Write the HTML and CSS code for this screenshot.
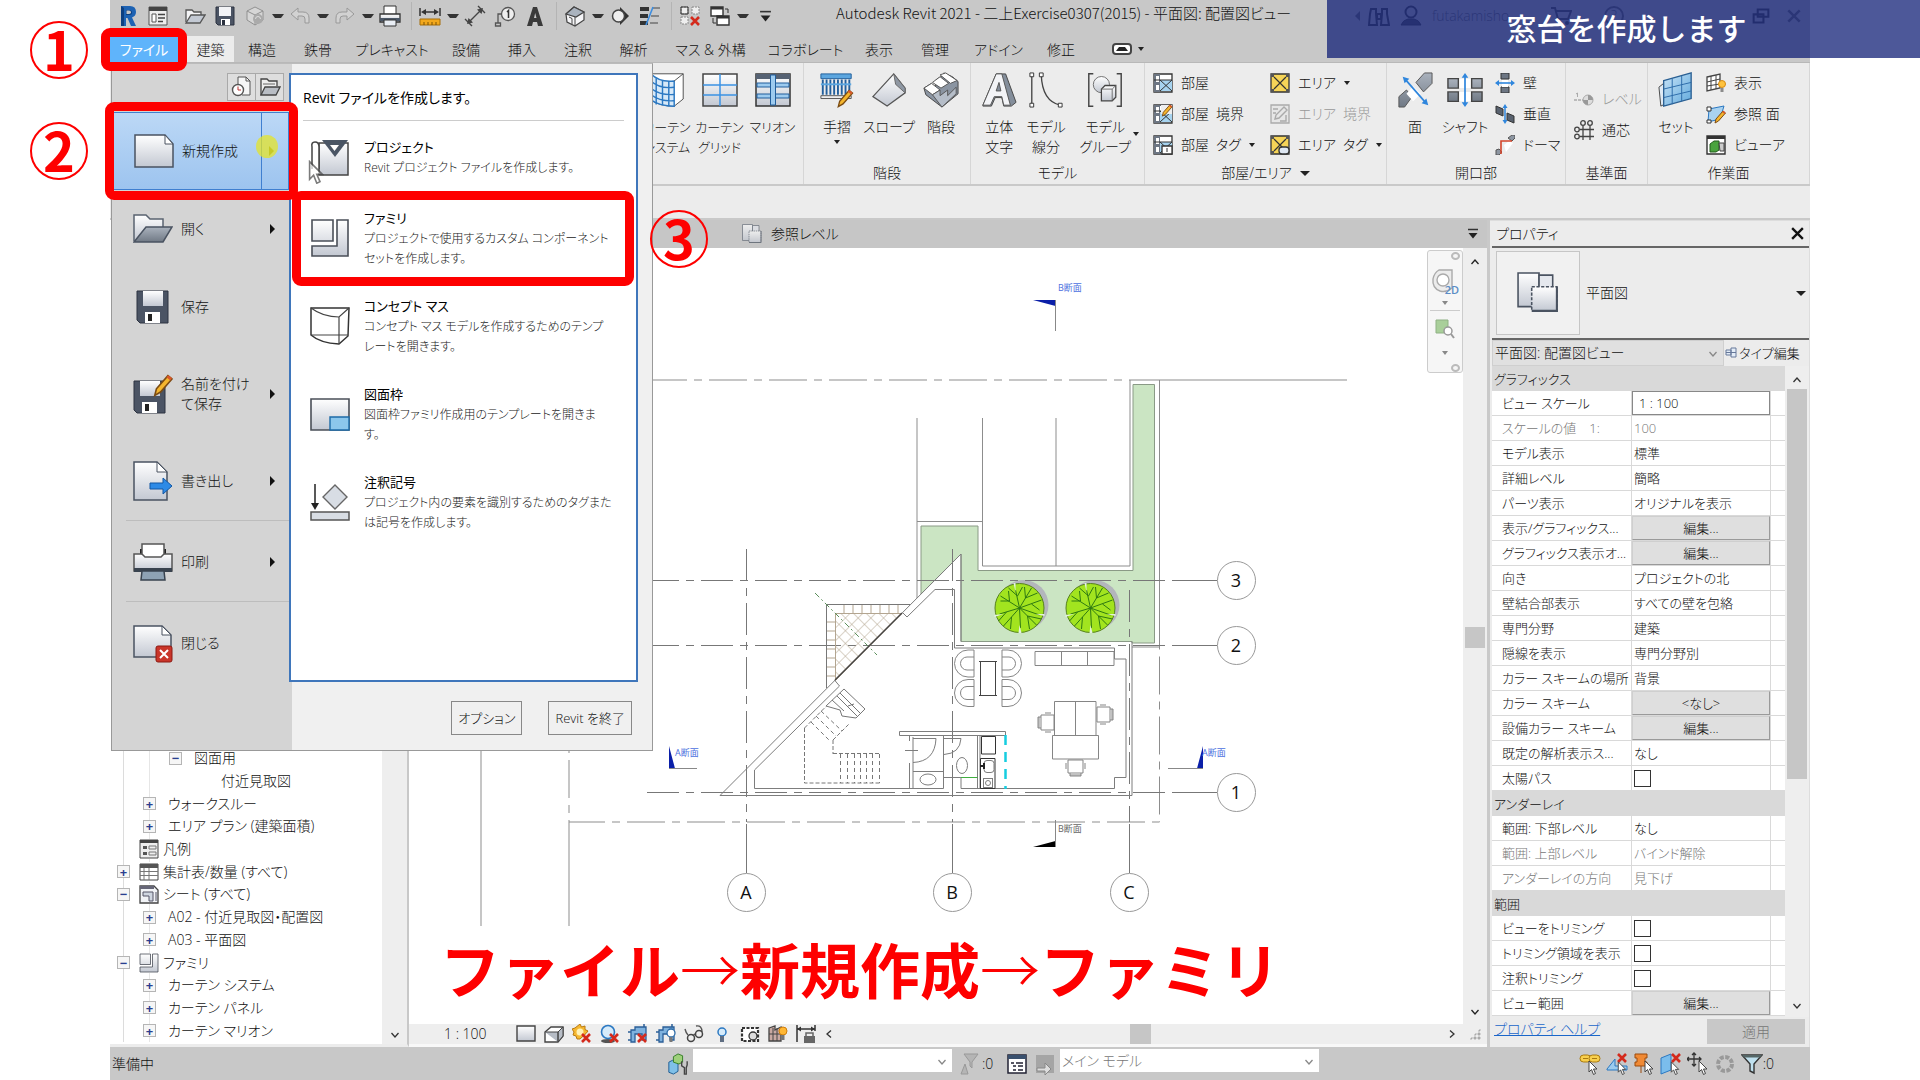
FILE: index.html
```html
<!DOCTYPE html>
<html lang="ja">
<head>
  <meta charset="UTF-8">
  <meta name="viewport" content="width=device-width, initial-scale=1.0">
  <title>Autodesk Revit 2021 - 配置図ビュー</title>
  <link rel="stylesheet" href="styles.css">
</head>
<body>

<!-- Icon sprite -->
<svg class="sprite" aria-hidden="true">
  <defs>
    <linearGradient id="metal" x1="0" y1="0" x2="0" y2="1"><stop offset="0" stop-color="#fff"/><stop offset="1" stop-color="#c3c8d2"/></linearGradient>
    <linearGradient id="steel" x1="0" y1="0" x2="0" y2="1"><stop offset="0" stop-color="#aab2bd"/><stop offset="1" stop-color="#707985"/></linearGradient>
    <linearGradient id="glass" x1="0" y1="0" x2="1" y2="1"><stop offset="0" stop-color="#c9e4f7"/><stop offset="1" stop-color="#5fa8dc"/></linearGradient>
  </defs>

  <!-- shared bits -->
  <symbol id="i-pencil" viewBox="0 0 12 14"><path d="M1 13l1-4 7-8 2.500 2-7 8z" fill="#f4b52d" stroke="#7b4b12"/><path d="M8 2l2.500 2 1-1.500-2.300-1.800z" fill="#d9582a"/></symbol>
  <symbol id="i-cross" viewBox="0 0 10 10"><path d="M1 1l8 8M9 1l-8 8" stroke="#d42a1c" stroke-width="2.600" fill="none"/></symbol>
  <symbol id="i-pointer" viewBox="0 0 10 15"><path d="M1 1v11l2.500-2.500 2 5 2-1-2-4.500h3.500z" fill="#fff" stroke="#444"/></symbol>

  <!-- quick access -->
  <symbol id="i-revit" viewBox="0 0 22 22"><path d="M4 1h9q6 0 6 6 0 4-4 5.500l4 8.500h-5l-3.500-8H9v8H4z" fill="#1d62b3"/><path d="M4 1l3 2v18H4zM9 5h3q3 0 3 2.500T12 10H9z" fill="#0d3f80"/><path d="M9.500 5.500h2.500q2 0 2 1.700T12 9H9.500z" fill="#c8c8c8"/></symbol>
  <symbol id="i-home" viewBox="0 0 22 22"><path d="M2 2h18v18H2z" fill="#eee" stroke="#555"/><path d="M2 2h18v4H2z" fill="#444"/><path d="M5 9h4v8H5z" fill="#fff" stroke="#555"/><path d="M11 9.500h7M11 13h7M11 16.500h5" stroke="#444" stroke-width="1.500"/></symbol>
  <symbol id="i-open" viewBox="0 0 22 22"><path d="M2 17V5h6l2 2h7v4" fill="#f4f4f6" stroke="#555" stroke-width="1.300"/><path d="M2 18l5-8h14l-5 8z" fill="#c3c9d3" stroke="#555" stroke-width="1.300"/></symbol>
  <symbol id="i-save" viewBox="0 0 22 22"><path d="M2 2h18v18H4l-2-2z" fill="#4b5464" stroke="#2c3240"/><path d="M5 2h12v9H5z" fill="#f2f3f6"/><path d="M7 14h9v6H7z" fill="#fff"/><path d="M8 15h3v5H8z" fill="#2c3240"/></symbol>
  <symbol id="i-sync" viewBox="0 0 22 22"><path d="M11 2l8 4v9l-8 5-8-5V6z" fill="#d6d6d6" stroke="#909090"/><path d="M3 6l8 4 8-4M11 10v10" fill="none" stroke="#909090"/><circle cx="14" cy="14" r="5" fill="#aaa"/><path d="M11.500 14a2.500 2.500 0 0 1 5 0" stroke="#ddd" fill="none"/></symbol>
  <symbol id="i-undo" viewBox="0 0 22 22"><path d="M2 9l7-6v4h5q6 0 6 6v5h-4v-4q0-3-3-3H9v4z" fill="#d2d2d2" stroke="#999"/></symbol>
  <symbol id="i-redo" viewBox="0 0 22 22"><path d="M20 9l-7-6v4H8q-6 0-6 6v5h4v-4q0-3 3-3h4v4z" fill="#d2d2d2" stroke="#999"/></symbol>
  <symbol id="i-print" viewBox="0 0 22 22"><path d="M5 1h12v9H5z" fill="#fff" stroke="#333"/><path d="M1 9h20v8H1z" fill="url(#metal)" stroke="#333" stroke-width="1.300"/><path d="M1 13h20v3H1z" fill="#4c5868"/><path d="M5 15h12v6H5z" fill="#e9eef5" stroke="#333"/></symbol>
  <symbol id="i-measure" viewBox="0 0 22 22"><path d="M1 14h20v6H1z" fill="#f2a81d" stroke="#a36d0b"/><path d="M5 17v3M9 17v3M13 17v3M17 17v3" stroke="#7c5205"/><path d="M4 7h14M1 3v8M21 3v8" stroke="#333" stroke-width="1.500"/><path d="M2 7l5-3v6zM20 7l-5-3v6z" fill="#333"/></symbol>
  <symbol id="i-dim" viewBox="0 0 22 22"><path d="M4 18L18 4M1 14l7 7M14 1l7 7" stroke="#444" stroke-width="1.400"/><path d="M3 19l1.500-6 4.500 4.500zM19 3l-1.500 6L13 4.500z" fill="#444"/></symbol>
  <symbol id="i-tag" viewBox="0 0 22 22"><circle cx="14" cy="9" r="6.500" fill="#eee" stroke="#555" stroke-width="1.300"/><path d="M13 7l1.500-1.500V13" stroke="#333" fill="none" stroke-width="1.500"/><path d="M8 9H4v9M1.500 18h5v3h-5z" fill="none" stroke="#555" stroke-width="1.300"/></symbol>
  <symbol id="i-bigA" viewBox="0 0 22 22"><path d="M3 21L9 2h4l6 19h-5l-1-4H9l-1 4zM10 13h2.500L11.200 8z" fill="#3a3a3a"/></symbol>
  <symbol id="i-house" viewBox="0 0 22 22"><path d="M2 9l8-7 10 5v8l-9 6-8-4z" fill="#f5f5f7" stroke="#444" stroke-width="1.200"/><path d="M2 9l8-7 10 5-8 5z" fill="#aab3be" stroke="#444" stroke-width="1.200"/><path d="M11 12v9M5 12l3 1.500V19" stroke="#444" fill="none"/></symbol>
  <symbol id="i-section" viewBox="0 0 22 22"><path d="M11 2l9 9-9 9z" fill="#333"/><circle cx="9.500" cy="11" r="6" fill="#eee" stroke="#444" stroke-width="1.500"/></symbol>
  <symbol id="i-thin" viewBox="0 0 22 22"><path d="M1 4h9M1 11h8M1 18h8" stroke="#333" stroke-width="4"/><path d="M13 3h8M12 11h8M11 18h8" stroke="#444"/><path d="M7 20L14 2" stroke="#3d8de0" stroke-width="1.600"/></symbol>
  <symbol id="i-closewin" viewBox="0 0 22 22"><path d="M2 2h7v7H2zM13 2h7v7h-7zM2 12h7v7H2z" fill="#eee" stroke="#888" stroke-dasharray="2 1"/><path d="M2 2h7v7H2z" fill="none" stroke="#333"/><use href="#i-cross" x="11" y="11" width="10" height="10"/></symbol>
  <symbol id="i-switch" viewBox="0 0 22 22"><path d="M2 2h12v9H2z" fill="#fff" stroke="#333" stroke-width="1.400"/><path d="M8 11h12v9H8z" fill="#fff" stroke="#333" stroke-width="1.400"/><path d="M2 2h12v2.500H2zM8 11h12v2.500H8z" fill="#333"/><path d="M16 4h3v4M4 13v5h3" stroke="#333" fill="none"/></symbol>
  <symbol id="i-caretbar" viewBox="0 0 12 12"><path d="M1 1.500h10" stroke="#333" stroke-width="1.500"/><path d="M1.500 5h9L6 10.500z" fill="#222"/></symbol>
  <symbol id="i-binoc" viewBox="0 0 22 22"><path d="M3 4h5v5l1 11H1l1-11zM14 4h5v5l2 11h-8l1-11zM9 9h4v5H9z" fill="none" stroke="#555" stroke-width="2"/></symbol>
  <symbol id="i-user" viewBox="0 0 22 22"><circle cx="11" cy="7" r="5.500" fill="none" stroke="#555" stroke-width="2"/><path d="M1 20q2-5 7-6h6q5 1 7 6z" fill="#666" stroke="#555"/></symbol>
  <symbol id="i-cart" viewBox="0 0 22 22"><path d="M1 3h4l3 11h10l3-8H6" fill="none" stroke="#666" stroke-width="2"/><circle cx="9" cy="18" r="2" fill="#666"/><circle cx="17" cy="18" r="2" fill="#666"/></symbol>
  <symbol id="i-restore" viewBox="0 0 22 22"><path d="M7 3h13v9H7zM2 9h12v10H2z" fill="none" stroke="#555" stroke-width="2.500"/></symbol>
  <symbol id="i-x" viewBox="0 0 14 14"><path d="M2 2l10 10M12 2L2 12" stroke="currentColor" stroke-width="2.200"/></symbol>
  <symbol id="i-chev" viewBox="0 0 10 10"><path d="M1.500 3L5 7l3.500-4" fill="none" stroke="currentColor" stroke-width="1.300"/></symbol>

  <!-- ribbon, large -->
  <symbol id="r-curtain" viewBox="0 0 40 38"><path d="M2 1h36v28l-10 8Q12 37 2 30z" fill="#fff" stroke="#444"/><path d="M2 1q10 10 26 8v28Q12 37 2 30z" fill="#d7e9f8" stroke="#2b78c2" stroke-width="1.600"/><path d="M2 9q10 9 26 7M2 17q10 8 26 7M2 24q10 8 26 7M8 6v29M15 8v28M22 9v28" fill="none" stroke="#2b78c2" stroke-width="1.600"/><path d="M28 9L38 1" stroke="#444"/></symbol>
  <symbol id="r-grid" viewBox="0 0 36 36"><path d="M1 2h34v32H1z" fill="url(#metal)" stroke="#444" stroke-width="1.500"/><path d="M18 2v32M1 13h34M1 23h34" stroke="#3b92e4" stroke-width="1.500"/></symbol>
  <symbol id="r-mullion" viewBox="0 0 36 36"><path d="M1 2h34v32H1z" fill="url(#metal)" stroke="#333" stroke-width="1.500"/><path d="M1 2h34v5H1z" fill="#566273"/><path d="M2 11h32v4H2zM2 22h32v4H2z" fill="#9dcbef" stroke="#225f9c"/><path d="M15.500 3h5v30h-5z" fill="#9dcbef" stroke="#225f9c"/></symbol>
  <symbol id="r-rail" viewBox="0 0 38 38"><path d="M2 2h32v5H2z" fill="#5ca6df" stroke="#225f9c"/><path d="M4 8v16M8 8v16M12 8v16M16 8v16M20 8v16M24 8v16M28 8v16M32 8v16" stroke="#225f9c" stroke-width="2"/><path d="M2 13h32" stroke="#5ca6df" stroke-width="2"/><path d="M2 25h32v3H2z" fill="#eee" stroke="#555"/><use href="#i-pencil" x="18" y="18" width="19" height="20"/></symbol>
  <symbol id="r-ramp" viewBox="0 0 38 38"><path d="M2 26L24 2l12 15v5L17 36z" fill="url(#metal)" stroke="#555" stroke-width="1.300"/><path d="M24 2l12 15v5L26 13z" fill="#8e97a3" stroke="#666"/></symbol>
  <symbol id="r-stair" viewBox="0 0 38 38"><path d="M1 17l8-5 1 5 5-4-1-5 8-5v-2l9 4 6 5v13L20 37 3 24z" fill="#8b95a2" stroke="#444"/><path d="M1 17l8-5 9 7-8 5zM10 11l8-6 9 7-8 5zM18 3l6-2 12 8-7 3z" fill="#fff" stroke="#555"/><path d="M10 24l8-5v6l8-6v6l9-9v7L20 37z" fill="#b5bdc8" stroke="#555"/></symbol>
  <symbol id="r-text" viewBox="0 0 38 38"><path d="M2 35L16 2h10l11 30-5 4h-8l-2-9h-7l-4 9H2z" fill="#848e9b" stroke="#444"/><path d="M2 35L16 2h6l9 33h-7l-2-9h-8l-4 9zM16 20h5l-2-9z" fill="#f3f4f7" stroke="#555"/></symbol>
  <symbol id="r-line" viewBox="0 0 38 38"><path d="M4 3v32M14 3q1 28 20 32" fill="none" stroke="#444" stroke-width="1.400"/><path d="M2 1h4v4H2zM2 33h4v4H2zM12 1h4v4h-4zM32 33h4v4h-4z" fill="#fff" stroke="#333"/></symbol>
  <symbol id="r-group" viewBox="0 0 40 38"><path d="M7 1H2v36h5M33 1h5v36h-5" fill="none" stroke="#444" stroke-width="1.600"/><circle cx="16" cy="13" r="9" fill="url(#metal)" stroke="#666"/><path d="M16 18l4-4h12v13l-4 4H16z" fill="url(#metal)" stroke="#444" stroke-width="1.400"/><path d="M16 18h12v13M28 18l4-4" fill="none" stroke="#666"/></symbol>
  <symbol id="r-face" viewBox="0 0 38 38"><path d="M20 11l9-10h8v11l-9 9zM2 26l8-7 6 7-8 11H2z" fill="url(#steel)" stroke="#555"/><path d="M17 15l8 8-8 8-7-8z" fill="#fff"/><path d="M8 7l22 25" stroke="#2f86dd" stroke-width="1.800"/><path d="M6 5l7 2-5 5zM33 35l-7-2 5-5z" fill="#2f86dd"/></symbol>
  <symbol id="r-shaft" viewBox="0 0 38 38"><path d="M1 7h11v10H1zM26 7h11v10H26zM1 21h11v10H1zM26 21h11v10H26z" fill="url(#steel)" stroke="#444" stroke-width="1.500"/><path d="M13 7h12v10H13zM13 21h12v10H13z" fill="#fff"/><path d="M19 4v30" stroke="#2f86dd" stroke-width="1.800"/><path d="M19 1l3.500 5h-7zM19 37l3.500-5h-7z" fill="#2f86dd"/></symbol>
  <symbol id="r-set" viewBox="0 0 38 38"><path d="M1 16l10-8v24l-8 4z" fill="#dfeaf4" stroke="#444"/><path d="M6 9l29-8v27L6 36z" fill="url(#glass)" stroke="#2a5f92" stroke-width="1.400"/><path d="M6 18l29-7M6 27l29-7M15 6.500V34M25 4v27" stroke="#2a6aa8"/></symbol>

  <!-- ribbon, small -->
  <symbol id="s-room" viewBox="0 0 20 20"><path d="M1 1h18v18H1z" fill="#fff" stroke="#333" stroke-width="1.300"/><path d="M1 1h6v18H1z" fill="#6d7683"/><path d="M3 3h3v6H3zM3 12h3v5H3z" fill="#fff"/><path d="M7 7h12v11H7z" fill="#a6d3ef"/><path d="M7 7l12 11M19 7L7 18M1 7h18" stroke="#333"/></symbol>
  <symbol id="s-roomsep" viewBox="0 0 20 20"><use href="#s-room"/><path d="M8 1h11v9H8z" fill="#eee"/><use href="#i-pencil" x="8" y="0" width="12" height="13"/></symbol>
  <symbol id="s-roomtag" viewBox="0 0 20 20"><use href="#s-room"/><path d="M9 11h10v8H9z" fill="#fff" stroke="#333" stroke-width="1.300"/><path d="M14 13v4" stroke="#333"/></symbol>
  <symbol id="s-area" viewBox="0 0 20 20"><path d="M1 1h18v18H1z" fill="#f6d457" stroke="#333" stroke-width="1.300"/><path d="M4 4l12 12M16 4L4 16" stroke="#333" stroke-width="1.200"/><path d="M1 1h3v3H1zM16 1h3v3h-3zM1 16h3v3H1zM16 16h3v3h-3z" fill="#555"/></symbol>
  <symbol id="s-areasep" viewBox="0 0 20 20"><path d="M1 1h18v18H1z" fill="#e6e6e6" stroke="#aaa" stroke-width="1.300"/><path d="M5 15l1-4 8-8 3 3-8 8zM3 5h5M3 9h3M10 17h6v-6" stroke="#aaa" fill="none" stroke-width="1.400"/></symbol>
  <symbol id="s-areatag" viewBox="0 0 20 20"><use href="#s-area"/><rect x="9" y="12" width="10" height="7" rx="3" fill="#dfe8f3" stroke="#333" stroke-width="1.300"/></symbol>
  <symbol id="s-wall" viewBox="0 0 20 20"><path d="M6 0h8v6H6zM6 14h8v6H6z" fill="#6d7683" stroke="#333"/><path d="M7 7h6v7H7z" fill="#fff"/><path d="M3 10h14" stroke="#2f86dd" stroke-width="1.600"/><path d="M0 10l4-3v6zM20 10l-4-3v6z" fill="#2f86dd"/></symbol>
  <symbol id="s-vert" viewBox="0 0 20 20"><path d="M1 2l7 3v7l-7-3zM12 9l7 3v7l-7-3z" fill="#59626f" stroke="#333"/><path d="M10 2v16" stroke="#2f86dd" stroke-width="1.500"/><path d="M10 0l2.500 4h-5zM10 20l2.500-4h-5z" fill="#2f86dd"/></symbol>
  <symbol id="s-dormer" viewBox="0 0 20 20"><path d="M1 15l3-1 3 3-3 3H1zM13 3l4-3h3v3l-3 3z" fill="#8c95a1" stroke="#555"/><path d="M9 10l5-4 4 2-7 9z" fill="#fff"/><path d="M6 19V6h11" fill="none" stroke="#d4452b" stroke-width="1.600"/></symbol>
  <symbol id="s-level" viewBox="0 0 20 20"><path d="M0 11h10" stroke="#aaa" stroke-width="1.400" stroke-dasharray="3 1"/><path d="M2 5l1.500-1v4" stroke="#aaa" fill="none"/><circle cx="14" cy="11" r="5" fill="#ddd" stroke="#aaa"/><path d="M14 11V6a5 5 0 0 1 5 5zM14 11v5a5 5 0 0 1-5-5z" fill="#999"/></symbol>
  <symbol id="s-gridl" viewBox="0 0 20 20"><g fill="none" stroke="#444" stroke-width="1.300"><circle cx="9" cy="3" r="2.300"/><circle cx="16" cy="3" r="2.300"/><circle cx="3" cy="9.500" r="2.300"/><circle cx="3" cy="16.500" r="2.300"/><path d="M9 6v14M16 6v14M6 9.500h14M6 16.500h14"/></g></symbol>
  <symbol id="s-show" viewBox="0 0 20 20"><path d="M1 4l13-3v14L1 18z" fill="#fff" stroke="#444" stroke-width="1.300"/><path d="M1 9l13-3M1 13l13-2M5 3v14M10 2v14" stroke="#444"/><circle cx="16" cy="11" r="3.500" fill="#ffc33e" stroke="#d68a12"/><path d="M14.500 15h3v4h-3z" fill="#8b8b8b"/></symbol>
  <symbol id="s-refpl" viewBox="0 0 20 20"><path d="M3 5l15-3-4 13-12 3z" fill="#a9d2f0" stroke="#2b78c2"/><path d="M1 3h4v4H1zM1 16h4v3H1z" fill="#fff" stroke="#333"/><use href="#i-pencil" x="8" y="6" width="12" height="14"/></symbol>
  <symbol id="s-viewer" viewBox="0 0 20 20"><path d="M1 1h18v18H1z" fill="#fff" stroke="#333" stroke-width="1.400"/><path d="M1 1h18v3H1z" fill="#333"/><path d="M4 9l4-3h5v9l-3 2H4z" fill="#4aa33e" stroke="#245c1d"/><path d="M13 8h5v8h-4z" fill="#ccc" stroke="#444"/></symbol>

  <!-- application menu -->
  <symbol id="m-new" viewBox="0 0 40 34"><path d="M1 1h30l8 9v23H1z" fill="url(#metal)" stroke="#4a5361" stroke-width="1.500"/><path d="M31 1v9h8z" fill="#fff" stroke="#4a5361"/></symbol>
  <symbol id="m-open" viewBox="0 0 40 34"><path d="M1 29V3h12l4 4h13v10" fill="url(#metal)" stroke="#5a6370" stroke-width="1.500"/><path d="M1 30l12-15h26L30 30z" fill="url(#steel)" stroke="#4a5361" stroke-width="1.500"/></symbol>
  <symbol id="m-save" viewBox="0 0 40 34"><path d="M4 1h31v32H7l-3-3z" fill="#4b5464" stroke="#2c3240"/><path d="M10 1h20v15H10z" fill="url(#metal)"/><path d="M12 22h15v11H12z" fill="#fff"/><path d="M15 24h4v7h-4z" fill="#222"/></symbol>
  <symbol id="m-saveas" viewBox="0 0 40 40"><g transform="translate(-3 6)"><use href="#m-save" width="40" height="34"/></g><use href="#i-pencil" x="18" y="0" width="24" height="23"/></symbol>
  <symbol id="m-export" viewBox="0 0 40 40"><path d="M1 1h23l10 10v28H1z" fill="url(#metal)" stroke="#4a5361" stroke-width="1.500"/><path d="M24 1v10h10z" fill="#fff" stroke="#4a5361"/><path d="M17 22h13v-5l9 8-9 8v-5H17z" fill="#2d8ae6" stroke="#1357a3"/></symbol>
  <symbol id="m-print" viewBox="0 0 40 38"><path d="M7 6h26v6H7z" fill="#222"/><path d="M1 11h38v17H1z" fill="url(#metal)" stroke="#555" stroke-width="1.500"/><path d="M1 25h38v4H1z" fill="#39434f"/><path d="M9 1h22v10l-3 3H12l-3-3z" fill="#fff" stroke="#555" stroke-width="1.500"/><path d="M9 28h22l1 9H8z" fill="#8ea2b4" stroke="#39434f" stroke-width="1.500"/></symbol>
  <symbol id="m-close" viewBox="0 0 40 40"><path d="M1 3h28l9 9v22H1z" fill="url(#metal)" stroke="#4a5361" stroke-width="1.500"/><path d="M29 3v9h9z" fill="#fff" stroke="#4a5361"/><rect x="23" y="23" width="16" height="16" rx="2" fill="#c9352a" stroke="#8c1a12"/><path d="M27 27l8 8M35 27l-8 8" stroke="#fff" stroke-width="2"/></symbol>
  <symbol id="m-project" viewBox="0 0 40 38"><path d="M9 4h29v32H9z" fill="url(#metal)" stroke="#444" stroke-width="1.500"/><path d="M9 30V8q0-5-4-5T2 8v22" fill="#fff" stroke="#444" stroke-width="1.500"/><path d="M12 1h26L25 18z" fill="#4a5564"/><path d="M20 6h9l-4.500 6z" fill="#fff"/></symbol>
  <symbol id="m-family" viewBox="0 0 40 40"><path d="M2 2h21v21H2zM27 2h11v36H2V28h25z" fill="url(#metal)" stroke="#4a4f58" stroke-width="1.600"/></symbol>
  <symbol id="m-mass" viewBox="0 0 40 40"><path d="M1 2h38l-1 28-9 8Q10 37 1 29z" fill="#fff" stroke="#333" stroke-width="1.500"/><path d="M1 2q12 9 28 9L39 2M29 11v27M1 29h37" fill="none" stroke="#444" stroke-width="1.200"/></symbol>
  <symbol id="m-title" viewBox="0 0 40 40"><path d="M1 5h38v31H1z" fill="url(#metal)" stroke="#4a4f58" stroke-width="1.600"/><path d="M20 23h19v13H20z" fill="#8cc7ec" stroke="#1c6ba8" stroke-width="1.400"/></symbol>
  <symbol id="m-annot" viewBox="0 0 40 40"><path d="M5 2v24" stroke="#222" stroke-width="1.500"/><path d="M5 28l-4-7h8z" fill="#222"/><path d="M25 3l12 12-12 12-12-12z" fill="#d8dde4" stroke="#666" stroke-width="1.400"/><path d="M1 30h38v8H1z" fill="#d8dde4" stroke="#555" stroke-width="1.500"/></symbol>
  <symbol id="m-recent" viewBox="0 0 22 22"><path d="M7 8V1h8l4 4v14h-8" fill="#f6f6f6" stroke="#555"/><path d="M15 1v4h4" fill="none" stroke="#555"/><circle cx="7" cy="14" r="5.500" fill="#fff" stroke="#555" stroke-width="1.400"/><path d="M7 10.500V14h3" stroke="#b33" fill="none"/></symbol>
  <symbol id="m-opendoc" viewBox="0 0 22 22"><path d="M2 19V3h6l2 2h8v5" fill="#eee" stroke="#444" stroke-width="1.300"/><path d="M2 19l4-8h15l-4 8z" fill="#b9bdc4" stroke="#444" stroke-width="1.300"/><path d="M4 8h12" stroke="#666"/></symbol>

  <!-- project browser -->
  <symbol id="b-legend" viewBox="0 0 20 20"><path d="M1 1h18v18H1z" fill="#eee" stroke="#444"/><path d="M1 1h18v3H1z" fill="#444"/><path d="M4 7h4v3H4zM4 13h4v3H4z" fill="#555"/><path d="M10 7h7v3h-7zM10 13h7v3h-7z" fill="none" stroke="#777"/></symbol>
  <symbol id="b-sched" viewBox="0 0 20 20"><path d="M1 2h18v16H1z" fill="#fff" stroke="#444"/><path d="M1 2h18v4H1z" fill="#555"/><path d="M1 9.500h18M1 13.500h18M5 6v12M10 6v12" stroke="#777"/></symbol>
  <symbol id="b-sheet" viewBox="0 0 20 20"><path d="M1 2h14l4 4v13H1z" fill="#f1f3f6" stroke="#444" stroke-width="1.300"/><path d="M1 2h14v3H1z" fill="#667"/><path d="M4 8h10v9h-4v-5H4zM17 8v9" fill="#cfd6e0" stroke="#556"/></symbol>
  <symbol id="b-plan" viewBox="0 0 40 40"><path d="M1 1h20v32H1z" fill="url(#metal)" stroke="#4a5361" stroke-width="1.500"/><path d="M21 3h13v30H21z" fill="#e5e8ee" stroke="#4a5361" stroke-width="1.500"/><path d="M14 14h24v23H14z" fill="url(#metal)" stroke="#4a5361" stroke-width="1.500" stroke-dasharray="3 1.500"/><path d="M38 14v23H14" fill="none" stroke="#4a5361" stroke-width="2"/></symbol>
  <symbol id="b-type" viewBox="0 0 12 12"><path d="M1 3h5v5H1zM6 1h5v9H6zM1 5.500h10" fill="#e3ecf7" stroke="#66789a"/></symbol>

  <!-- view control bar -->
  <symbol id="v-detail" viewBox="0 0 20 20"><path d="M1 2h18v15H1z" fill="url(#metal)" stroke="#444" stroke-width="1.400"/></symbol>
  <symbol id="v-style" viewBox="0 0 20 20"><path d="M1 8l6-5h12v9l-5 6H1z" fill="#fff" stroke="#444" stroke-width="1.400"/><path d="M1 8h13v10M14 8l5-5v9l-5 6z" fill="#b7bdc6" stroke="#444"/></symbol>
  <symbol id="v-sun" viewBox="0 0 20 20"><path d="M8 0l1.500 3L13 2l0 3.500 3 1.500-2 2.500L8 15l-3 0-1-3-3-1 1-3L0 5l3-1z" fill="#f6b831" stroke="#b97a10"/><circle cx="8" cy="8" r="3.500" fill="#fff2b8"/><use href="#i-cross" x="9" y="9" width="10" height="10"/></symbol>
  <symbol id="v-shadow" viewBox="0 0 20 20"><ellipse cx="8" cy="17" rx="7" ry="2" fill="#555"/><circle cx="8" cy="8" r="6.500" fill="#d6ebfa" stroke="#2b78c2" stroke-width="1.600"/><use href="#i-cross" x="9" y="9" width="10" height="10"/></symbol>
  <symbol id="v-crop" viewBox="0 0 20 20"><path d="M3 6h4V3h11v13h-4v-6H7v8H3z" fill="#7fb2de" stroke="#2b5f98" stroke-width="1.300"/><path d="M0 8h3M0 16h3M16 0v3" stroke="#2b5f98" stroke-width="1.500"/></symbol>
  <symbol id="v-cropx" viewBox="0 0 20 20"><use href="#v-crop"/><use href="#i-cross" x="9" y="9" width="10" height="10"/></symbol>
  <symbol id="v-cropb" viewBox="0 0 20 20"><use href="#v-crop"/><circle cx="15" cy="9" r="4" fill="#fff" stroke="#2b6ba8" stroke-width="1.300"/><path d="M13.500 13h3v5h-3z" fill="#777"/></symbol>
  <symbol id="v-glasses" viewBox="0 0 20 20"><path d="M1 5q1 4 3 6M12 2q6-1 6 6M9 12q1-2 3-2" fill="none" stroke="#555" stroke-width="1.400"/><circle cx="7" cy="14" r="3.500" fill="none" stroke="#444" stroke-width="1.500"/><circle cx="15" cy="10" r="3.500" fill="none" stroke="#444" stroke-width="1.500"/></symbol>
  <symbol id="v-bulb" viewBox="0 0 20 20"><circle cx="10" cy="8" r="4" fill="#d6ebfa" stroke="#2b78c2" stroke-width="1.500"/><path d="M8 12h4v6H8z" fill="#5f6e82"/></symbol>
  <symbol id="v-temp" viewBox="0 0 20 20"><path d="M2 4h16v13H2z" fill="#fff" stroke="#333" stroke-width="2.200" stroke-dasharray="3 1.500"/><circle cx="13" cy="12" r="4" fill="#ddd" stroke="#333" stroke-width="1.300"/></symbol>
  <symbol id="v-analytic" viewBox="0 0 20 20"><path d="M1 4l6-2v4l6-3v14H1z" fill="#c9a9a2" stroke="#444" stroke-width="1.300"/><path d="M1 10h12M5 4v13M9 4v13" stroke="#444"/><circle cx="15" cy="7" r="4" fill="#ffb734" stroke="#cf7e0c"/><path d="M13.500 11h3v5h-3z" fill="#777"/></symbol>
  <symbol id="v-constr" viewBox="0 0 20 20"><path d="M1 1v17M19 1v6M1 5h18" stroke="#333" stroke-width="1.500"/><path d="M1 5l4-2.500v5zM19 5l-4-2.500v5z" fill="#333"/><path d="M8 12h11v7H8z" fill="#666"/><path d="M10 12v-3h7v3" fill="none" stroke="#666" stroke-width="1.500"/></symbol>

  <!-- status bar -->
  <symbol id="t-works" viewBox="0 0 22 24"><path d="M1 10l4-2 6 2v10l-5 3-5-2z" fill="#7fc0e8" stroke="#17588f"/><path d="M6 4l5-3 5 2v7l-4 2-6-2z" fill="#9ed07a" stroke="#2f7a22"/><path d="M15 9v5l3 2v7h2v-7l1-3V9" fill="none" stroke="#444" stroke-width="1.500"/></symbol>
  <symbol id="t-filter0" viewBox="0 0 20 22"><path d="M5 1h14l-6 8v6l-2-2V9zM2 21l4-10 3 10z" fill="#b5b5b5" stroke="#999"/></symbol>
  <symbol id="t-list" viewBox="0 0 22 22"><path d="M2 2h18v18H2z" fill="#fff" stroke="#223" stroke-width="1.500"/><path d="M2 2h18v4H2z" fill="#39506e"/><path d="M5 10h3M10 10h7M7 13h3M12 13h5M7 17h3M12 17h5" stroke="#223" stroke-width="1.500"/></symbol>
  <symbol id="t-exclude" viewBox="0 0 22 22"><path d="M2 2h18v18H2z" fill="#a5a5a5"/><path d="M3 15h8v-5l6 6-6 6v-4H3z" fill="#ddd" stroke="#888"/></symbol>
  <symbol id="t-link" viewBox="0 0 22 24"><rect x="1" y="3" width="11" height="7" rx="3.500" fill="#f8cf4d" stroke="#a97a10"/><rect x="10" y="3" width="11" height="7" rx="3.500" fill="#f8cf4d" stroke="#a97a10"/><path d="M4 6.500h5M13 6.500h5" stroke="#a97a10"/><use href="#i-pointer" x="9" y="8" width="10" height="15"/></symbol>
  <symbol id="t-underlay" viewBox="0 0 22 24"><path d="M1 17l8-10v7h12v4H1z" fill="#9ccbee" stroke="#2b78c2"/><use href="#i-cross" x="11" y="1" width="10" height="10"/><use href="#i-pointer" x="11" y="9" width="10" height="14"/></symbol>
  <symbol id="t-pin" viewBox="0 0 22 24"><path d="M2 2h12v4h-2v4h2v4H2v-4h2V6H2zM8 14v7" fill="#f08a35" stroke="#9c4a0d"/><use href="#i-pointer" x="11" y="8" width="10" height="15"/></symbol>
  <symbol id="t-face" viewBox="0 0 22 24"><path d="M1 6l10-4v16L1 22z" fill="#7bbdec" stroke="#2b78c2"/><use href="#i-cross" x="11" y="1" width="10" height="10"/><use href="#i-pointer" x="10" y="9" width="10" height="14"/></symbol>
  <symbol id="t-drag" viewBox="0 0 22 24"><path d="M7 1v13M0 7h14M5 3l2-2 2 2M5 12l2 2 2-2M2 5L0 7l2 2M12 5l2 2-2 2" fill="none" stroke="#333" stroke-width="1.300"/><use href="#i-pointer" x="11" y="8" width="10" height="15"/></symbol>
  <symbol id="t-gear" viewBox="0 0 22 24"><circle cx="11" cy="12" r="7" fill="none" stroke="#999" stroke-width="4" stroke-dasharray="4 1.500"/></symbol>
  <symbol id="t-filter" viewBox="0 0 22 24"><path d="M1 3h20l-8 9v9l-4-2v-7z" fill="#bfe0ee" stroke="#333" stroke-width="1.400"/><path d="M1 3h20l-2 2.500H3z" fill="#566"/></symbol>
</svg>

<div class="stage">
  <div class="app">

    <!-- Title bar -->
    <header class="titlebar">
      <div class="quick">
        <button class="qa"><svg><use href="#i-revit"/></svg></button>
        <button class="qa qa-wide"><svg><use href="#i-home"/></svg></button>
        <button class="qa"><svg><use href="#i-open"/></svg></button>
        <button class="qa"><svg><use href="#i-save"/></svg></button>
        <button class="qa"><svg><use href="#i-sync"/></svg></button>
        <button class="drop"></button>
        <button class="qa"><svg><use href="#i-undo"/></svg></button>
        <button class="drop"></button>
        <button class="qa"><svg><use href="#i-redo"/></svg></button>
        <button class="drop"></button>
        <button class="qa"><svg><use href="#i-print"/></svg></button>
        <span class="sep"></span>
        <button class="qa"><svg><use href="#i-measure"/></svg></button>
        <button class="drop"></button>
        <button class="qa"><svg><use href="#i-dim"/></svg></button>
        <button class="qa"><svg><use href="#i-tag"/></svg></button>
        <button class="qa"><svg><use href="#i-bigA"/></svg></button>
        <span class="sep"></span>
        <button class="qa"><svg><use href="#i-house"/></svg></button>
        <button class="drop"></button>
        <button class="qa"><svg><use href="#i-section"/></svg></button>
        <button class="qa"><svg><use href="#i-thin"/></svg></button>
        <span class="sep"></span>
        <button class="qa"><svg><use href="#i-closewin"/></svg></button>
        <button class="qa"><svg><use href="#i-switch"/></svg></button>
        <button class="drop"></button>
        <button class="qa qa-small"><svg><use href="#i-caretbar"/></svg></button>
      </div>
      <div class="doc-title">Autodesk Revit 2021 - 二上Exercise0307(2015) - 平面図: 配置図ビュー</div>
      <div class="account">
        <span class="back"></span>
        <svg><use href="#i-binoc"/></svg>
        <svg><use href="#i-user"/></svg>
        <span class="user-name">futakamisho</span>
        <svg class="cart"><use href="#i-cart"/></svg>
        <span class="help">?</span>
        <svg class="restore"><use href="#i-restore"/></svg>
        <svg class="shut"><use href="#i-x"/></svg>
      </div>
    </header>

    <!-- Ribbon tabs -->
    <nav class="tabs">
      <button class="tab tab-file">ファイル</button>
      <span></span>
      <button class="tab tab-on">建築</button>
      <button class="tab">構造</button>
      <button class="tab">鉄骨</button>
      <button class="tab">プレキャスト</button>
      <button class="tab">設備</button>
      <button class="tab">挿入</button>
      <button class="tab">注釈</button>
      <button class="tab">解析</button>
      <button class="tab">マス &amp; 外構</button>
      <button class="tab">コラボレート</button>
      <button class="tab">表示</button>
      <button class="tab">管理</button>
      <button class="tab">アドイン</button>
      <button class="tab">修正</button>
      <span class="tab-state"><button class="tab-min"></button><i class="caret"></i></span>
    </nav>

    <!-- Ribbon -->
    <div class="ribbon">
      <section class="panel panel-build">
        <div class="tools">
          <button class="big"><svg><use href="#r-curtain"/></svg>カーテン<br>システム</button>
          <button class="big"><svg><use href="#r-grid"/></svg>カーテン<br>グリッド</button>
          <button class="big"><svg><use href="#r-mullion"/></svg>マリオン</button>
        </div>
        <h2></h2>
      </section>
      <section class="panel panel-stairs">
        <div class="tools">
          <button class="big"><svg><use href="#r-rail"/></svg>手摺<i class="caret"></i></button>
          <button class="big"><svg><use href="#r-ramp"/></svg>スロープ</button>
          <button class="big"><svg><use href="#r-stair"/></svg>階段</button>
        </div>
        <h2>階段</h2>
      </section>
      <section class="panel panel-model">
        <div class="tools">
          <button class="big"><svg><use href="#r-text"/></svg>立体<br>文字</button>
          <button class="big"><svg><use href="#r-line"/></svg>モデル<br>線分</button>
          <button class="big"><svg><use href="#r-group"/></svg>モデル<br>グループ<i class="caret caret-side"></i></button>
        </div>
        <h2>モデル</h2>
      </section>
      <section class="panel panel-room">
        <div class="tools">
          <div class="stack">
            <button class="small"><svg><use href="#s-room"/></svg>部屋</button>
            <button class="small"><svg><use href="#s-roomsep"/></svg>部屋&ensp;境界</button>
            <button class="small"><svg><use href="#s-roomtag"/></svg>部屋&ensp;タグ<i class="caret"></i></button>
          </div>
          <div class="stack">
            <button class="small"><svg><use href="#s-area"/></svg>エリア<i class="caret"></i></button>
            <button class="small" disabled><svg><use href="#s-areasep"/></svg>エリア&ensp;境界</button>
            <button class="small"><svg><use href="#s-areatag"/></svg>エリア&ensp;タグ<i class="caret"></i></button>
          </div>
        </div>
        <h2>部屋/エリア<i class="caret caret-lg"></i></h2>
      </section>
      <section class="panel panel-open">
        <div class="tools">
          <button class="big"><svg><use href="#r-face"/></svg>面</button>
          <button class="big"><svg><use href="#r-shaft"/></svg>シャフト</button>
          <div class="stack">
            <button class="small"><svg><use href="#s-wall"/></svg>壁</button>
            <button class="small"><svg><use href="#s-vert"/></svg>垂直</button>
            <button class="small"><svg><use href="#s-dormer"/></svg>ドーマ</button>
          </div>
        </div>
        <h2>開口部</h2>
      </section>
      <section class="panel panel-datum">
        <div class="tools">
          <div class="stack">
            <button class="small" disabled><svg><use href="#s-level"/></svg>レベル</button>
            <button class="small"><svg><use href="#s-gridl"/></svg>通芯</button>
          </div>
        </div>
        <h2>基準面</h2>
      </section>
      <section class="panel panel-work">
        <div class="tools">
          <button class="big"><svg><use href="#r-set"/></svg>セット</button>
          <div class="stack">
            <button class="small"><svg><use href="#s-show"/></svg>表示</button>
            <button class="small"><svg><use href="#s-refpl"/></svg>参照 面</button>
            <button class="small"><svg><use href="#s-viewer"/></svg>ビューア</button>
          </div>
        </div>
        <h2>作業面</h2>
      </section>
    </div>
    <div class="options-bar"></div>

    <!-- Workspace -->
    <main class="workspace">

      <!-- Project browser -->
      <aside class="browser">
        <ul class="tree">
          <li class="lv3"><button class="exp">−</button><span>図面用</span></li>
          <li class="lv4"><span>付近見取図</span></li>
          <li class="lv2"><button class="exp">+</button><span>ウォークスルー</span></li>
          <li class="lv2"><button class="exp">+</button><span>エリア プラン (建築面積)</span></li>
          <li class="lv1 leaf"><svg><use href="#b-legend"/></svg><span>凡例</span></li>
          <li class="lv1"><button class="exp">+</button><svg><use href="#b-sched"/></svg><span>集計表/数量 (すべて)</span></li>
          <li class="lv1"><button class="exp">−</button><svg><use href="#b-sheet"/></svg><span>シート (すべて)</span></li>
          <li class="lv2"><button class="exp">+</button><span>A02 - 付近見取図・配置図</span></li>
          <li class="lv2"><button class="exp">+</button><span>A03 - 平面図</span></li>
          <li class="lv1"><button class="exp">−</button><svg><use href="#m-family"/></svg><span>ファミリ</span></li>
          <li class="lv2"><button class="exp">+</button><span>カーテン システム</span></li>
          <li class="lv2"><button class="exp">+</button><span>カーテン パネル</span></li>
          <li class="lv2"><button class="exp">+</button><span>カーテン マリオン</span></li>
        </ul>
        <div class="vscroll"><svg class="chev"><use href="#i-chev"/></svg></div>
      </aside>

      <!-- Drawing area -->
      <section class="view">
        <div class="view-tabs">
          <button class="view-tab"><svg><use href="#b-plan"/></svg>参照レベル</button>
          <svg class="tab-menu"><use href="#i-caretbar"/></svg>
        </div>
        <div class="view-body">
          <div class="sheet">
            <svg class="drawing" viewBox="410 248 1054 776" preserveAspectRatio="xMinYMin meet">
              <defs>
                <pattern id="tile" width="9" height="9" patternUnits="userSpaceOnUse" patternTransform="rotate(45)"><path d="M0 0h9M0 0v9" stroke="#b3a590" fill="none"/></pattern>
                <g id="tree" fill="none" stroke="#2f7a12">
                  <circle cx="4" cy="-3" r="25" fill="#b3b6bb" stroke="none"/>
                  <circle r="24.500" fill="#a2e41f" stroke="#56801f"/>
                  <path d="M0 0L-4-18M0 0L-19-12M0 0L-20 6M0 0L-16 18M0 0L1 20M0 0L17 17M0 0L20 7M0 0L22-8M0 0L12-20M-10-7l-1-10M-10-7l-9 0M-13 4l-8 9M-8 9l-1 12M8 8l2 13M8 8l14 3M12-4l8 6M6-10l-1-11M6-10l12-5M-2-12l-9-8M-2-12l5-9"/>
                  <path d="M-6-25l2 9 0-9zM-25 7l9-1-9 3zM-1 25l1-8 2 8zM25 6l-9 0 9 2z" stroke="none" fill="#e4f1df"/>
                </g>
                <g id="armchair"><path d="M9 0H3a13 13 0 0 0 0 27h6zM9 7H2a6.500 6.500 0 0 0 0 13h7"/></g>
                <g id="deskchair"><path d="M3 0h13v15H3zM3 2H0v11h3M7-2h6M7 17h6M1 2v11"/></g>
              </defs>

              <!-- planting -->
              <path d="M922 526h57v44.500h155v-186h21.500V643H1133v-1.500H962V554l-40 40z" fill="#cbe5c3" stroke="#8a9a86"/>
              <use href="#tree" x="1020.500" y="608"/>
              <use href="#tree" x="1091.500" y="608"/>

              <!-- site -->
              <g fill="none" stroke="#8d8d8d">
                <path d="M482 700v226M570 822v104M1131 380h217M1131 380v186M1160.500 380v267H1133"/>
                <path d="M410 380h721M570 700v122h590.500V647" stroke-dasharray="38 7 8 7"/>
                <path d="M918 418v180M983.500 418v148H1131M1057 418v148M918 521.500h65.500"/>
              </g>

              <!-- grid lines -->
              <g fill="none" stroke="#777">
                <path d="M648 580.500h530M648 645.500h530M648 792.500h530M747.500 549v273M953.500 549v273M1130.500 590v232" stroke-dasharray="32 7 8 7"/>
                <path d="M1176 580.500h42M1176 645.500h42M1176 792.500h42M747.500 824v49M953.500 824v49M1130.500 824v49"/>
              </g>
              <g class="bubbles">
                <circle cx="747.500" cy="892.500" r="19"/><circle cx="953.500" cy="892.500" r="19"/><circle cx="1130.500" cy="892.500" r="19"/>
                <circle cx="1237.500" cy="580.500" r="19"/><circle cx="1237.500" cy="645.500" r="19"/><circle cx="1237.500" cy="792.500" r="19"/>
                <text x="747" y="899">A</text><text x="953" y="899">B</text><text x="1130" y="899">C</text>
                <text x="1237" y="587">3</text><text x="1237" y="652">2</text><text x="1237" y="799">1</text>
              </g>

              <!-- terrace -->
              <g fill="none" stroke="#b3a590">
                <path d="M836.500 613.500H903l-66.500 67z" fill="url(#tile)"/>
                <path d="M827.500 622h9M827.500 631h9M827.500 640h9M827.500 649h9M827.500 658h9M827.500 667h9M827.500 676h9M845 604v9M854 604v9M863 604v9M872 604v9M881 604v9M890 604v9M899 604v9"/>
                <path d="M911 604.500h-83.500V688" stroke="#777"/>
                <path d="M816 593l62 62" stroke="#5a8f5a" stroke-dasharray="6 3 2 3"/>
              </g>

              <!-- walls -->
              <g fill="none" stroke="#7d7d7d">
                <path d="M962 554v87.500M962 554L721 795.500h412V641.500"/>
                <path d="M908 617l-4-4M908 617l28-27.500h19.500V648h160v11H1127v118.500h-11.500v11H962v-11"/>
                <path d="M755.500 770v18.500h189M755.500 770l85-84-5-6"/>
                <path d="M836 680l67-67" stroke="#444" stroke-width="1.300"/>
                <path d="M900.500 735.500v-4h106v4zM914 737v51M910.500 735v6M910.500 763v25M944.500 735.500v53M978.500 735.500v53M981 735.500v53M906 750.500h13"/>
                <path d="M914 738.500h23q-1 23-23 24M945 738.500h17q-1 15-17 16M914 771.500h30.500M945 777.500h17"/>
                <ellipse cx="929" cy="779.500" rx="8" ry="5.500"/>
                <ellipse cx="963" cy="765.500" rx="5.500" ry="8"/>
                <path d="M962 777.500h16.500" stroke="#3fae3f"/>
                <path d="M982.500 736.500h14v17.500h-14zM981.500 758.500h14.500v30h-14.500z" stroke="#333"/>
                <rect x="985" y="760.500" width="10" height="12" rx="3"/><rect x="984.500" y="778.500" width="9" height="9"/><circle cx="989" cy="783" r="2.500"/>
                <path d="M981 766h5M985 763v6" stroke="#222" stroke-width="2"/>
                <path d="M1006.500 735v54" stroke="#16cde0" stroke-width="2.500" stroke-dasharray="10 7"/>
              </g>

              <!-- stairs -->
              <g fill="none" stroke="#777">
                <path d="M805.500 728v55H881M834 753.500h47M834 740v14M805.500 728l22-22M834 740l16-16" stroke-dasharray="4 2"/>
                <path d="M841.500 754v29M848.500 754v29M855.500 754v29M861.500 754v29M867.500 754v29M873.500 754v29M880.500 754v29M812 722l19 19M817 716l20 20M822 711l21 20" stroke-dasharray="4 3"/>
                <path d="M827 706l18-17 21 20-9 9M827 706l14 4 2 6 14 2M833 700l12 11M838 696l20 20M849 706l6-2M841 693l20 20"/>
              </g>

              <!-- furniture -->
              <g fill="none" stroke="#858585">
                <use href="#armchair" x="966" y="650"/><use href="#armchair" x="966" y="679.500"/>
                <g transform="matrix(-1 0 0 1 1978 0)"><use href="#armchair" x="966" y="650"/><use href="#armchair" x="966" y="679.500"/></g>
                <path d="M981.500 661.500h15v34h-15zM980 661.500h18M980 695.500h18" stroke="#444"/>
                <path d="M1036 651.500h79v14h-79zM1062.500 651.500v14M1088.500 651.500v14"/>
                <path d="M1055.500 701.500H1097v34h-41.500zM1076.500 701.500v34M1053.500 735.500h46v23.500h-46z"/>
                <use href="#deskchair" x="1039" y="715"/>
                <g transform="matrix(-1 0 0 1 2153 0)"><use href="#deskchair" x="1039" y="707"/></g>
                <g transform="translate(1069 776) rotate(-90)"><use href="#deskchair"/></g>
              </g>

              <!-- section marks -->
              <path d="M1034 300h22.500v6z" fill="#0b1fa8"/>
              <path d="M670 746l6 22.500h-6zM1204 746v22.500h-6z" fill="#0b1fa8"/>
              <path d="M1034 847l22.500-6v6z" fill="#000"/>
              <path d="M1056.500 300v31M1056.500 820v27M670 768.500h28M1169 768.500h35" stroke="#888"/>
              <g class="marks"><text x="1059" y="291">B断面</text><text x="676" y="756">A断面</text><text x="1203" y="756">A断面</text><text x="1059" y="832" class="mark-dim">B断面</text></g>
            </svg>

            <div class="navbar">
              <i class="dot"></i>
              <div class="wheel"><svg viewBox="0 0 28 28"><path d="M8 2h13v18q-6 5-12 3-8-3-7-12 1-6 6-9z" fill="#ececec" stroke="#aaa" stroke-width="1.400"/><circle cx="12" cy="12" r="6" fill="#fff" stroke="#aaa" stroke-width="1.400"/></svg><span>2D</span></div>
              <i class="caret"></i>
              <hr>
              <svg viewBox="0 0 20 20" class="zoomer"><path d="M1 1h12v13H1z" fill="#a9cf9a" stroke="#8fb184"/><circle cx="13" cy="12" r="4" fill="#fff" stroke="#999" stroke-width="1.500"/><path d="M16 15l3 4" stroke="#999" stroke-width="2"/></svg>
              <i class="caret"></i>
              <i class="dot dot-end"></i>
            </div>
          </div>
          <div class="vscroll vscroll-view">
            <svg class="chev up"><use href="#i-chev"/></svg><i class="thumb"></i><svg class="chev"><use href="#i-chev"/></svg>
          </div>
        </div>
        <div class="view-bar">
          <span class="scale">1 : 100</span>
          <button><svg><use href="#v-detail"/></svg></button>
          <button><svg><use href="#v-style"/></svg></button>
          <button><svg><use href="#v-sun"/></svg></button>
          <button><svg><use href="#v-shadow"/></svg></button>
          <button><svg><use href="#v-cropx"/></svg></button>
          <button><svg><use href="#v-cropb"/></svg></button>
          <button><svg><use href="#v-glasses"/></svg></button>
          <button><svg><use href="#v-bulb"/></svg></button>
          <button><svg><use href="#v-temp"/></svg></button>
          <button><svg><use href="#v-analytic"/></svg></button>
          <button><svg><use href="#v-constr"/></svg></button>
          <div class="hscroll"><svg class="chev left"><use href="#i-chev"/></svg><i class="thumb"></i><svg class="chev right"><use href="#i-chev"/></svg></div>
          <i class="grip"></i>
        </div>
      </section>

      <!-- Properties -->
      <aside class="props">
        <div class="props-head">プロパティ<svg><use href="#i-x"/></svg></div>
        <div class="type-row">
          <span class="type-thumb"><svg><use href="#b-plan"/></svg></span>
          <span>平面図</span>
          <i class="caret caret-lg"></i>
        </div>
        <div class="filter-row">
          <div class="combo combo-grey">
            <select aria-label="ビュー"><option>平面図: 配置図ビュー</option></select>
            <svg class="chev"><use href="#i-chev"/></svg>
          </div>
          <button class="edit-type"><svg><use href="#b-type"/></svg>タイプ編集</button>
        </div>
        <div class="props-body">
          <table>
            <colgroup><col class="c-name"><col class="c-val"><col></colgroup>
            <tr class="group"><th colspan="3">グラフィックス</th></tr>
            <tr><td><label for="scale">ビュー スケール</label></td><td class="fill"><input type="text" id="scale" value="1 : 100"></td><td></td></tr>
            <tr class="dim"><td>スケールの値　1:</td><td>100</td><td></td></tr>
            <tr><td>モデル表示</td><td>標準</td><td></td></tr>
            <tr><td>詳細レベル</td><td>簡略</td><td></td></tr>
            <tr><td>パーツ表示</td><td>オリジナルを表示</td><td></td></tr>
            <tr><td>表示/グラフィックス...</td><td class="fill"><button>編集...</button></td><td></td></tr>
            <tr><td>グラフィックス表示オ...</td><td class="fill"><button>編集...</button></td><td></td></tr>
            <tr><td>向き</td><td>プロジェクトの北</td><td></td></tr>
            <tr><td>壁結合部表示</td><td>すべての壁を包絡</td><td></td></tr>
            <tr><td>専門分野</td><td>建築</td><td></td></tr>
            <tr><td>隠線を表示</td><td>専門分野別</td><td></td></tr>
            <tr><td>カラー スキームの場所</td><td>背景</td><td></td></tr>
            <tr><td>カラー スキーム</td><td class="fill"><button>&lt;なし&gt;</button></td><td></td></tr>
            <tr><td>設備カラー スキーム</td><td class="fill"><button>編集...</button></td><td></td></tr>
            <tr><td>既定の解析表示ス...</td><td>なし</td><td></td></tr>
            <tr><td><label for="sun">太陽パス</label></td><td><input type="checkbox" id="sun"></td><td></td></tr>
            <tr class="group"><th colspan="3">アンダーレイ</th></tr>
            <tr><td>範囲: 下部レベル</td><td>なし</td><td></td></tr>
            <tr class="dim"><td>範囲: 上部レベル</td><td>バインド解除</td><td></td></tr>
            <tr class="dim"><td>アンダーレイの方向</td><td>見下げ</td><td></td></tr>
            <tr class="group"><th colspan="3">範囲</th></tr>
            <tr><td><label for="crop">ビューをトリミング</label></td><td><input type="checkbox" id="crop"></td><td></td></tr>
            <tr><td><label for="cropshow">トリミング領域を表示</label></td><td><input type="checkbox" id="cropshow"></td><td></td></tr>
            <tr><td><label for="anno">注釈トリミング</label></td><td><input type="checkbox" id="anno"></td><td></td></tr>
            <tr><td>ビュー範囲</td><td class="fill"><button>編集...</button></td><td></td></tr>
          </table>
          <div class="vscroll vscroll-props">
            <svg class="chev up"><use href="#i-chev"/></svg><i class="thumb"></i><svg class="chev"><use href="#i-chev"/></svg>
          </div>
        </div>
        <div class="props-foot"><a href="#">プロパティ ヘルプ</a><button disabled>適用</button></div>
      </aside>
    </main>

    <!-- Status bar -->
    <footer class="status">
      <span class="status-text">準備中</span>
      <svg><use href="#t-works"/></svg>
      <div class="combo"><select aria-label="ワークセット"><option></option></select><svg class="chev"><use href="#i-chev"/></svg></div>
      <svg><use href="#t-filter0"/></svg><span class="count">:0</span>
      <svg><use href="#t-list"/></svg>
      <svg><use href="#t-exclude"/></svg>
      <div class="combo"><select aria-label="デザイン オプション"><option>メイン モデル</option></select><svg class="chev"><use href="#i-chev"/></svg></div>
      <div class="select-tools">
        <svg><use href="#t-link"/></svg>
        <svg><use href="#t-underlay"/></svg>
        <svg><use href="#t-pin"/></svg>
        <svg><use href="#t-face"/></svg>
        <svg><use href="#t-drag"/></svg>
        <svg><use href="#t-gear"/></svg>
        <svg><use href="#t-filter"/></svg>
        <span>:0</span>
      </div>
    </footer>
  </div>

  <!-- Application menu -->
  <div class="appmenu">
    <div class="menu-left">
      <div class="recent"><button><svg><use href="#m-recent"/></svg></button><button><svg><use href="#m-opendoc"/></svg></button></div>
      <button class="item item-on"><svg><use href="#m-new"/></svg><span>新規作成</span><i class="arrow"></i></button>
      <button class="item"><svg><use href="#m-open"/></svg><span>開く</span><i class="arrow"></i></button>
      <button class="item"><svg><use href="#m-save"/></svg><span>保存</span></button>
      <button class="item item-tall"><svg><use href="#m-saveas"/></svg><span>名前を付け<br>て保存</span><i class="arrow"></i></button>
      <button class="item"><svg><use href="#m-export"/></svg><span>書き出し</span><i class="arrow"></i></button>
      <hr>
      <button class="item"><svg><use href="#m-print"/></svg><span>印刷</span><i class="arrow"></i></button>
      <hr>
      <button class="item"><svg><use href="#m-close"/></svg><span>閉じる</span></button>
    </div>
    <div class="menu-right">
      <div class="submenu">
        <h3>Revit ファイルを作成します。</h3>
        <button class="choice choice-short"><svg><use href="#m-project"/></svg><span><b>プロジェクト</b><br>Revit プロジェクト ファイルを作成します。</span></button>
        <button class="choice"><svg><use href="#m-family"/></svg><span><b>ファミリ</b><br>プロジェクトで使用するカスタム コンポーネント<br>セットを作成します。</span></button>
        <button class="choice"><svg><use href="#m-mass"/></svg><span><b>コンセプト マス</b><br>コンセプト マス モデルを作成するためのテンプ<br>レートを開きます。</span></button>
        <button class="choice"><svg><use href="#m-title"/></svg><span><b>図面枠</b><br>図面枠ファミリ作成用のテンプレートを開きま<br>す。</span></button>
        <button class="choice"><svg><use href="#m-annot"/></svg><span><b>注釈記号</b><br>プロジェクト内の要素を識別するためのタグまた<br>は記号を作成します。</span></button>
      </div>
      <div class="menu-foot"><button>オプション</button><button>Revit を終了</button></div>
    </div>
  </div>

  <!-- Tutorial overlay -->
  <i class="halo"></i>
  <svg class="cursor"><use href="#i-pointer"/></svg>
  <div class="frame frame-1"></div>
  <div class="frame frame-2"></div>
  <div class="frame frame-3"></div>
  <div class="step step-1">1</div>
  <div class="step step-2">2</div>
  <div class="step step-3">3</div>
  <div class="banner">窓台を作成します</div>
  <div class="caption">ファイル<i>→</i>新規作成<i>→</i>ファミリ</div>
</div>

</body>
</html>
```
FILE: styles.css
```css
/* Reset */
* { margin: 0; padding: 0; box-sizing: border-box; }
body {
  font-family: "Open Sans", "Noto Sans CJK JP", sans-serif;
  font-feature-settings: "palt";
  font-size: 14px;
  font-weight: 300;
  line-height: 20px;
  color: #111;
  background: #fff;
}
button, input, select { font: inherit; font-feature-settings: inherit; color: inherit; }
button { background: none; border: none; }
svg { display: block; flex: none; }
ul { list-style: none; }
.sprite { position: absolute; width: 0; height: 0; }

.stage { position: relative; overflow: hidden; }
.app {
  display: flex;
  flex-direction: column;
  min-height: 100vh;
  margin: 0 110px;
  background: #c8c8c8;
}

/* Small arrows */
.caret {
  display: inline-block;
  border: 3px solid transparent;
  border-top: 4px solid #222;
  border-bottom: 0;
}
.caret-lg { border-width: 5px 5px 0; }
.chev { width: 10px; height: 10px; color: #333; }
.chev.up { transform: rotate(180deg); }
.chev.left { transform: rotate(90deg); }
.chev.right { transform: rotate(-90deg); }

/* Title bar */
.titlebar { display: flex; height: 36px; padding-left: 3px; }
.quick { display: flex; align-items: center; height: 32px; width: 723px; }
.qa { width: 30px; display: flex; justify-content: center; flex: none; }
.qa svg { width: 22px; height: 22px; }
.qa-wide { margin-right: 7px; }
.qa-small svg { width: 13px; height: 13px; }
.drop { width: 15px; flex: none; }
.drop::before {
  content: "";
  display: block;
  margin: 0 auto;
  width: 6px;
  border: 3px solid transparent;
  border-top: 4px solid #333;
  border-bottom: 0;
}
.sep { width: 1px; height: 28px; margin: 0 3px 0 6px; background: #b4b4b4; flex: none; }
.doc-title { padding-top: 2px; font-family: "Noto Sans CJK JP", sans-serif; font-size: 15px; line-height: 22px; white-space: nowrap; }
.account { display: flex; align-items: center; height: 32px; margin-left: auto; padding-right: 8px; color: #777; }
.account svg { width: 22px; height: 22px; margin-right: 10px; }
.account .back { border: 5px solid transparent; border-right-color: #777; border-left: 0; margin-right: 8px; }
.user-name { width: 118px; }
.account .cart { margin-right: 32px; }
.help { width: 20px; border: 2px solid #777; border-radius: 50%; text-align: center; line-height: 16px; margin-right: 128px; }
.account .restore { width: 18px; height: 18px; margin-right: 16px; }
.account .shut { width: 16px; height: 16px; margin-right: 0; }

/* Tabs */
.tabs {
  display: grid;
  grid-template-columns: 68px 9px 47px 56px 56px 92px 56px 56px 56px 55px 99px 91px 56px 56px 71px 54px 80px;
  height: 27px;
  border-bottom: 1px solid #b8b8b8;
}
.tab { padding-top: 2px; white-space: nowrap; }
.tab-on { background: #ececec; }
.tab-file { background: #5fb4fb; color: #fff; font-weight: normal; }
.tab-state { display: flex; align-items: center; justify-content: center; gap: 6px; }
.tab-min { width: 20px; height: 12px; border: 2px solid #444; border-radius: 4px; background: #fff; }
.tab-min::before {
  content: "";
  display: block;
  width: 6px;
  margin: 0 auto;
  border: 3px solid transparent;
  border-bottom: 4px solid #222;
  border-top: 0;
}

/* Ribbon */
.ribbon { display: flex; height: 123px; background: #ececec; border-bottom: 2px solid #c9c9c9; }
.panel { display: flex; flex-direction: column; border-right: 1px solid #d6d6d6; flex: none; }
.panel-build { flex: 1; }
.panel-build .tools { justify-content: flex-end; padding-right: 4px; }
.panel-stairs { width: 167px; }
.panel-model { width: 174px; }
.panel-room { width: 242px; }
.panel-open { width: 179px; }
.panel-datum { width: 82px; }
.panel-work { width: 162px; }
.tools { display: flex; flex: 1; padding: 0 3px; }
.panel h2 { height: 22px; font-size: 14px; font-weight: inherit; line-height: 22px; text-align: center; }
.panel h2 .caret { margin: 0 0 2px 8px; }
.big {
  position: relative;
  display: flex;
  flex-direction: column;
  align-items: center;
  justify-content: flex-start;
  width: 50px;
  padding-top: 9px;
  white-space: nowrap;
}
.big svg { width: 36px; height: 36px; margin-bottom: 9px; }
.big .caret { margin-top: 3px; }
.big .caret-side { position: absolute; right: 2px; top: 66px; }
.panel-build .big { width: 53px; font-size: 13px; }
.panel-stairs .tools { padding-left: 7px; }
.panel-stairs .big { width: 54px; }
.panel-model .tools { padding-left: 5px; }
.panel-model .big { width: 47px; }
.panel-model .big:last-child { width: 72px; }
.stack { display: flex; flex-direction: column; padding: 4px 0 0 5px; width: 117px; }
.panel-open .stack, .panel-work .stack, .panel-datum .stack { width: auto; }
.panel-datum .stack { padding-top: 20px; }
.small { display: flex; align-items: center; gap: 8px; height: 31px; white-space: nowrap; }
.small svg { width: 20px; height: 20px; }
.small:disabled { color: #999; }
.options-bar { height: 34px; background: #ececec; border-bottom: 2px solid #c9c9c9; }

/* Workspace */
.workspace { display: flex; flex: 1; background: #ececec; }

/* Project browser */
.browser { display: flex; align-items: flex-end; width: 299px; background: #fff; border-right: 2px solid #c8c8c8; border-bottom: 3px solid #ececec; }
.tree {
  flex: 1;
  display: grid;
  grid-auto-rows: 1fr;
  height: 295px;
  margin-bottom: 2px;
  background: linear-gradient(#dcdcdc, #dcdcdc) 13px 0 / 1px 100% no-repeat, linear-gradient(#e6e6e6, #e6e6e6) 39px 0 / 1px 100% no-repeat;
}
.tree li { display: flex; align-items: center; white-space: nowrap; }
.tree span { background: #fff; }
.exp {
  width: 13px;
  height: 13px;
  border: 1px solid #b5b5b5;
  background: #f6f6f6;
  color: #2a3f8f;
  font-size: 13px;
  font-weight: bold;
  line-height: 10px;
}
.lv1 { padding-left: 7px; }
.lv2 { padding-left: 33px; }
.lv3 { padding-left: 59px; }
.lv4 { padding-left: 111px; }
.tree svg { width: 20px; height: 20px; margin: 0 4px 0 9px; background: #fff; }
.leaf svg { margin-left: 22px; }
.lv2 span, .lv3 span { margin-left: 12px; }

/* Scroll bars */
.vscroll { display: flex; flex-direction: column; align-items: center; justify-content: flex-end; align-self: stretch; width: 25px; padding-bottom: 4px; background: #eee; }
.vscroll .thumb { width: 20px; background: #c6c6c6; }

/* Drawing area */
.view { display: flex; flex-direction: column; flex: 1; min-width: 0; border-right: 3px solid #c9c9c9; }
.view-tabs { display: flex; align-items: center; justify-content: space-between; height: 28px; padding: 0 8px 0 333px; background: #c6c6c6; }
.view-tab { display: flex; align-items: center; gap: 9px; }
.view-tab svg { width: 20px; height: 20px; opacity: .7; }
.tab-menu { width: 12px; height: 12px; }
.view-body { display: flex; flex: 1; background: #fff; }
.sheet { position: relative; flex: 1; min-width: 0; }
.drawing { position: absolute; inset: 0; width: 100%; height: 100%; }
.bubbles circle { fill: #fff; stroke: #999; }
.bubbles text { font-size: 18px; font-weight: 400; text-anchor: middle; fill: #111; }
.marks text { font-size: 9px; font-weight: 400; fill: #4c6fe0; }
.marks .mark-dim { fill: #666; }
.vscroll-view { width: 24px; justify-content: space-between; padding: 9px 0 7px; }
.vscroll-view .thumb { height: 21px; }
.vscroll-view .chev { color: #222; }

/* Navigation bar in the canvas */
.navbar {
  position: absolute;
  top: 2px;
  right: 0;
  width: 36px;
  height: 123px;
  display: flex;
  flex-direction: column;
  align-items: center;
  background: #f6f6f6;
  border: 1px solid #ccc;
  border-radius: 3px;
}
.dot { align-self: flex-end; width: 9px; height: 9px; margin: 1px 2px 0 0; border: 2px solid #bbb; border-radius: 50%; }
.dot-end { margin-top: 9px; }
.wheel { position: relative; width: 28px; height: 28px; margin-top: 8px; }
.wheel svg { width: 28px; height: 28px; }
.wheel span { position: absolute; right: 0; bottom: 0; font-size: 11px; font-weight: 600; line-height: 12px; color: #5a8cc4; }
.navbar .caret { border-top-color: #888; margin-top: 5px; }
.navbar hr { width: 30px; border: 0; border-top: 1px solid #ccc; margin-top: 5px; }
.zoomer { width: 20px; height: 20px; margin: 8px 0 7px; }

/* View control bar */
.view-bar { display: flex; align-items: center; height: 23px; padding-left: 35px; border-bottom: 3px solid #f8f8f8; background: #eee; }
.scale { width: 68px; }
.view-bar button { width: 28px; }
.view-bar button svg { width: 20px; height: 20px; margin: 0 auto; }
.hscroll { display: flex; flex: 1; align-items: center; padding: 0 4px; align-self: stretch; }
.hscroll .thumb { width: 21px; align-self: stretch; margin-left: 296px; margin-right: auto; background: #c6c6c6; }
.grip { width: 12px; height: 12px; margin: 0 6px 0 8px; background: radial-gradient(#aaa 1px, transparent 2px) 0 0 / 4px 4px; clip-path: polygon(100% 0, 100% 100%, 0 100%); }

/* Properties */
.props { display: flex; flex-direction: column; width: 320px; padding-left: 2px; font-size: 13px; background: #ececec; border-top: 1px solid #ddd; border-right: 1px solid #ddd; }
.props-head { display: flex; align-items: center; justify-content: space-between; height: 27px; padding: 0 4px; border-bottom: 2px solid #666; font-size: 14px; }
.props-head svg { width: 15px; height: 15px; color: #111; }
.type-row { display: flex; align-items: center; gap: 6px; height: 92px; padding: 0 3px 0 4px; border-bottom: 2px solid #666; font-size: 14px; }
.type-row .caret { margin-left: auto; }
.type-thumb { display: flex; align-items: center; justify-content: center; width: 84px; height: 84px; border: 1px solid #c6c6c6; background: #f1f1f1; }
.type-thumb svg { width: 42px; height: 42px; }
.filter-row { display: flex; height: 26px; }
.combo { position: relative; background: #fff; }
.combo select { width: 100%; height: 100%; padding-left: 2px; border: none; background: none; appearance: none; }
.combo .chev { position: absolute; right: 5px; top: 8px; color: #888; }
.combo-grey { width: 232px; background: #e0e0e0; border: 1px solid #cfcfcf; font-size: 14px; }
.edit-type { display: flex; flex: 1; align-items: center; gap: 2px; padding-left: 1px; white-space: nowrap; }
.edit-type svg { width: 12px; height: 12px; }
.props-body { display: flex; flex: 1; }
.props table { width: 294px; align-self: flex-start; table-layout: fixed; border-spacing: 0; background: #fff; }
.c-name { width: 140px; }
.c-val { width: 139px; }
.props td, .props th { height: 25px; line-height: 22px; text-align: left; font-weight: inherit; white-space: nowrap; vertical-align: middle; }
.props td { border-right: 1px solid #d9d9d9; border-bottom: 1px solid #d9d9d9; padding-left: 2px; }
.props td:first-child { padding-left: 10px; }
.props td:last-child { border-right: none; }
.group th { background: #d9d9d9; padding-left: 2px; }
.dim { color: #777; }
.props .fill { padding: 0; }
.fill input, .fill button { display: block; width: 138px; height: 24px; border: 1px solid #888; }
.fill input { padding-left: 6px; background: #fff; }
.fill button { background: #dfdfdf; border-color: #cfcfcf #9a9a9a #9a9a9a #cfcfcf; }
.props input[type="checkbox"] { display: block; width: 17px; height: 17px; appearance: none; border: 1px solid #333; background: #fff; }
.vscroll-props { width: 24px; padding: 9px 0 6px; }
.vscroll-props .thumb { flex: none; height: 390px; margin: 4px 0 auto; }
.props-foot { display: flex; justify-content: space-between; height: 30px; padding: 2px 4px 3px 2px; }
.props-foot a { color: #1a66c9; font-size: 14px; }
.props-foot button { width: 98px; background: #c8c8c8; color: #777; font-size: 14px; }

/* Status bar */
.status { display: flex; align-items: center; height: 33px; padding: 0 36px 0 2px; }
.status > svg { width: 22px; height: 22px; margin-left: 6px; }
.status-text { width: 549px; }
.status .combo { width: 259px; height: 23px; margin: 0 0 6px 4px; color: #777; }
.status .combo select { line-height: 22px; }
.count { width: 20px; padding-left: 2px; }
.select-tools { display: flex; align-items: center; margin-left: auto; }
.select-tools svg { width: 22px; height: 24px; }
.select-tools svg + svg { margin-left: 5px; }

/* Application menu */
.appmenu { position: absolute; left: 111px; top: 63px; display: flex; width: 542px; height: 688px; background: #f0f0f0; border: 1px solid #999; border-top-color: #bbb; }
.menu-left { width: 177px; background: #d4d4d4; }
.recent { display: flex; width: 57px; height: 28px; margin: 9px 0 11px 115px; border: 1px solid #a9a9a9; background: #dedede; }
.recent button { flex: 1; display: flex; align-items: center; justify-content: center; }
.recent button + button { border-left: 1px solid #a9a9a9; }
.recent svg { width: 22px; height: 22px; }
.item { display: flex; align-items: center; width: 100%; height: 78px; padding: 0 14px 0 21px; text-align: left; }
.item-tall { height: 96px; }
.item svg { width: 40px; height: 40px; margin-right: 8px; }
.item .arrow { margin-left: auto; border: 5px solid transparent; border-left-color: #111; border-right: 0; }
.item-on { background: linear-gradient(90deg, transparent 148px, #3f7fd0 148px, #3f7fd0 149px, transparent 149px), linear-gradient(#bcd8f6, #9dc4ef); border: 1px solid #3f7fd0; }
.item-on .arrow { border-left-color: #6f7d22; }
.menu-left hr { margin: 0 0 2px 14px; border: 0; border-top: 1px solid #bdbdbd; }
.menu-right { flex: 1; background: linear-gradient(90deg, #d4d4d4 3px, #f0f0f0 3px); }
.submenu { width: 349px; height: 609px; margin-top: 9px; background: #fff; border: 2px solid #3f76bb; padding: 0 12px; color: #222; font-size: 12px; }
.submenu h3 { height: 46px; padding-top: 13px; border-bottom: 1px solid #ccc; color: #000; font-size: 14px; font-weight: normal; }
.choice { display: flex; align-items: center; gap: 14px; width: 100%; height: 88px; padding-left: 7px; text-align: left; white-space: nowrap; }
.choice-short { height: 73px; }
.choice b { color: #000; font-size: 13px; font-weight: normal; }
.choice svg { width: 40px; height: 40px; }
.menu-foot { display: flex; justify-content: flex-end; gap: 26px; padding: 19px 20px 0 0; }
.menu-foot button { height: 34px; padding: 0 6px; border: 1px solid #888; font-size: 13px; }

/* Tutorial overlay */
.halo { position: absolute; left: 256px; top: 135px; width: 22px; height: 23px; border-radius: 50%; background: rgba(228, 228, 40, .75); }
.cursor { position: absolute; left: 308px; top: 160px; width: 16px; height: 24px; opacity: .7; }
.frame { position: absolute; border: 9px solid #fe0000; border-radius: 9px; }
.frame-1 { left: 101px; top: 28px; width: 86px; height: 43px; }
.frame-2 { left: 105px; top: 102px; width: 193px; height: 98px; }
.frame-3 { left: 292px; top: 191px; width: 342px; height: 95px; }
.step {
  position: absolute;
  width: 58px;
  height: 58px;
  border: 2px solid #fe0000;
  border-radius: 50%;
  color: #fe0000;
  font-family: "Noto Sans CJK JP", sans-serif;
  font-size: 54px;
  font-weight: bold;
  line-height: 50px;
  text-align: center;
}
.step-1 { left: 30px; top: 21px; }
.step-2 { left: 30px; top: 122px; }
.step-3 { left: 650px; top: 210px; }
.banner {
  position: absolute;
  right: 0;
  top: 0;
  width: 593px;
  height: 58px;
  padding-left: 6px;
  background: rgba(18, 32, 119, .75);
  color: #fff;
  font-family: "Noto Sans CJK JP", sans-serif;
  font-feature-settings: normal;
  font-size: 30px;
  font-weight: 500;
  line-height: 54px;
  text-align: center;
}
.caption {
  position: absolute;
  left: 440px;
  bottom: 76px;
  color: #fe0000;
  font-family: "Noto Sans CJK JP", sans-serif;
  font-feature-settings: normal;
  font-size: 60px;
  font-weight: bold;
  line-height: 72px;
  white-space: nowrap;
}
.caption i { font-style: normal; font-weight: 300; }
```
